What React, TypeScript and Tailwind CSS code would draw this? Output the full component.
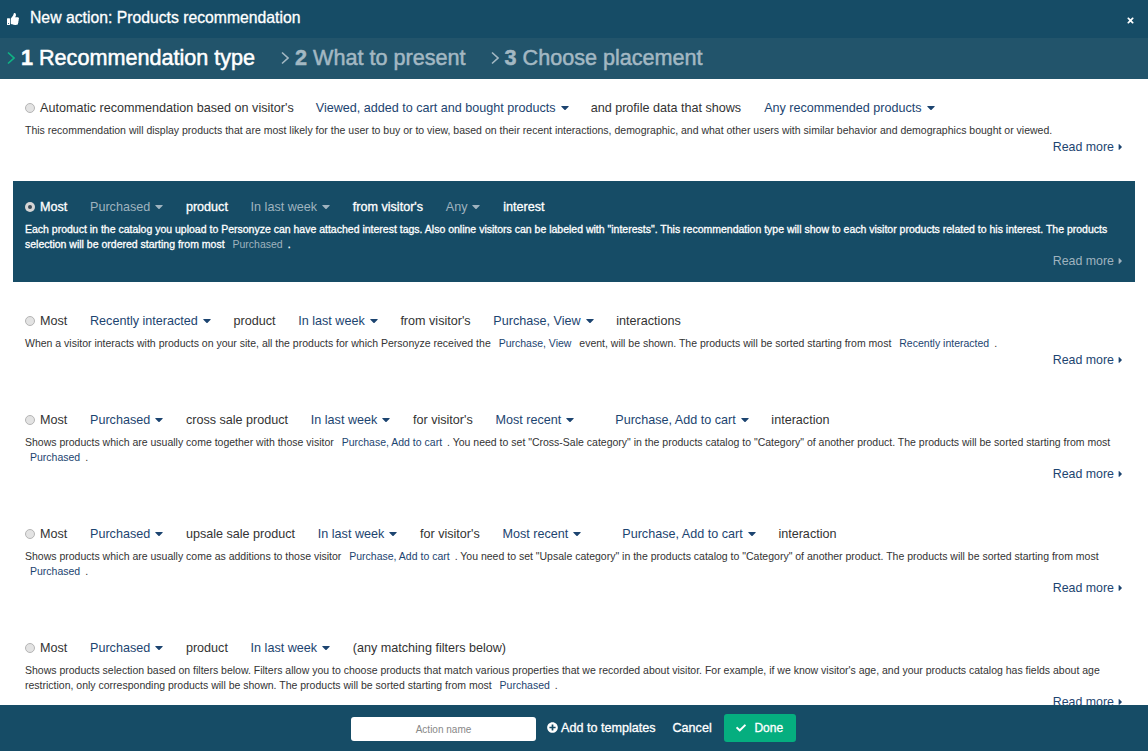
import { FaCaretDown, FaCaretRight, FaCheck, FaPlusCircle, FaThumbsUp, FaTimes } from "react-icons/fa";

type Piece = { text: string; link?: boolean; className: string };

type Row = {
  pieces: Piece[];
  desc: React.ReactNode;
  selected?: boolean;
  lastClass: string;
};

function Token({ children, selected }: { children: React.ReactNode; selected?: boolean }) {
  return (
    <span className={selected ? "mx-[5px] text-[#9fb3bf] [-webkit-text-stroke:0px]" : "mx-[5px] text-[#1c4470]"}>
      {children}
    </span>
  );
}

const rows: Row[] = [
  {
    lastClass: "h-[86px]",
    pieces: [
      { text: "Automatic recommendation based on visitor's", className: "ml-[5px]" },
      { text: "Viewed, added to cart and bought products", link: true, className: "ml-[22px]" },
      { text: "and profile data that shows", className: "ml-[22px]" },
      { text: "Any recommended products", link: true, className: "ml-[23px]" },
    ],
    desc: "This recommendation will display products that are most likely for the user to buy or to view, based on their recent interactions, demographic, and what other users with similar behavior and demographics bought or viewed.",
  },
  {
    selected: true,
    lastClass: "h-[101px]",
    pieces: [
      { text: "Most", className: "ml-[5px]" },
      { text: "Purchased", link: true, className: "ml-[22.7px]" },
      { text: "product", className: "ml-[22.7px]" },
      { text: "In last week", link: true, className: "ml-[22.7px]" },
      { text: "from visitor's", className: "ml-[22.7px]" },
      { text: "Any", link: true, className: "ml-[22.7px]" },
      { text: "interest", className: "ml-[22.7px]" },
    ],
    desc: (
      <>
        Each product in the catalog you upload to Personyze can have attached interest tags. Also online visitors can be labeled with "interests". This recommendation type will show to each visitor products related to his interest. The products selection will be ordered starting from most{" "}
        <Token selected>Purchased</Token>.
      </>
    ),
  },
  {
    lastClass: "h-[86px]",
    pieces: [
      { text: "Most", className: "ml-[5px]" },
      { text: "Recently interacted", link: true, className: "ml-[22.7px]" },
      { text: "product", className: "ml-[22.7px]" },
      { text: "In last week", link: true, className: "ml-[22.7px]" },
      { text: "from visitor's", className: "ml-[22.7px]" },
      { text: "Purchase, View", link: true, className: "ml-[22.7px]" },
      { text: "interactions", className: "ml-[22.7px]" },
    ],
    desc: (
      <>
        When a visitor interacts with products on your site, all the products for which Personyze received the{" "}
        <Token>Purchase, View</Token> event, will be shown. The products will be sorted starting from most{" "}
        <Token>Recently interacted</Token>.
      </>
    ),
  },
  {
    lastClass: "h-[101px]",
    pieces: [
      { text: "Most", className: "ml-[5px]" },
      { text: "Purchased", link: true, className: "ml-[22.7px]" },
      { text: "cross sale product", className: "ml-[22.7px]" },
      { text: "In last week", link: true, className: "ml-[22.7px]" },
      { text: "for visitor's", className: "ml-[22.7px]" },
      { text: "Most recent", link: true, className: "ml-[22.7px]" },
      { text: "Purchase, Add to cart", link: true, className: "ml-[41px]" },
      { text: "interaction", className: "ml-[22.7px]" },
    ],
    desc: (
      <>
        Shows products which are usually come together with those visitor{" "}
        <Token>Purchase, Add to cart</Token>. You need to set "Cross-Sale category" in the products catalog to "Category" of another product. The products will be sorted starting from most{" "}
        <Token>Purchased</Token>.
      </>
    ),
  },
  {
    lastClass: "h-[101px]",
    pieces: [
      { text: "Most", className: "ml-[5px]" },
      { text: "Purchased", link: true, className: "ml-[22.7px]" },
      { text: "upsale sale product", className: "ml-[22.7px]" },
      { text: "In last week", link: true, className: "ml-[22.7px]" },
      { text: "for visitor's", className: "ml-[22.7px]" },
      { text: "Most recent", link: true, className: "ml-[22.7px]" },
      { text: "Purchase, Add to cart", link: true, className: "ml-[41px]" },
      { text: "interaction", className: "ml-[22.7px]" },
    ],
    desc: (
      <>
        Shows products which are usually come as additions to those visitor{" "}
        <Token>Purchase, Add to cart</Token>. You need to set "Upsale category" in the products catalog to "Category" of another product. The products will be sorted starting from most{" "}
        <Token>Purchased</Token>.
      </>
    ),
  },
  {
    lastClass: "h-[101px]",
    pieces: [
      { text: "Most", className: "ml-[5px]" },
      { text: "Purchased", link: true, className: "ml-[22.7px]" },
      { text: "product", className: "ml-[22.7px]" },
      { text: "In last week", link: true, className: "ml-[22.7px]" },
      { text: "(any matching filters below)", className: "ml-[22.7px]" },
    ],
    desc: (
      <>
        Shows products selection based on filters below. Filters allow you to choose products that match various properties that we recorded about visitor. For example, if we know visitor's age, and your products catalog has fields about age restriction, only corresponding products will be shown. The products will be sorted starting from most{" "}
        <Token>Purchased</Token>.
      </>
    ),
  },
];

function RecommendationRow({ row }: { row: Row }) {
  const on = row.selected;
  return (
    <div className={`mb-[13px] shrink-0 px-[12px] pt-[16px] ${row.lastClass} ${on ? "bg-[#164c66] text-white [-webkit-text-stroke:0.3px_white]" : "text-[#333]"}`}>
      <div className="flex h-[20px] items-center text-[12.6px] whitespace-nowrap">
        {on ? (
          <span className="flex h-[10px] w-[10px] items-center justify-center rounded-full bg-[#d5d5d5]">
            <span className="h-[4px] w-[4px] rounded-full bg-[#3a4a55]" />
          </span>
        ) : (
          <span className="h-[10px] w-[10px] rounded-full border border-[#b5b5b5] bg-[#e3e3e3]" />
        )}
        {row.pieces.map((p, i) =>
          p.link ? (
            <span key={i} className={`flex items-center gap-[5px] ${p.className} ${on ? "text-[#9fb3bf] [-webkit-text-stroke:0px]" : "text-[#1c4470]"}`}>
              {p.text}
              <FaCaretDown className="h-[13px] w-[8px]" />
            </span>
          ) : (
            <span key={i} className={p.className}>{p.text}</span>
          ),
        )}
      </div>
      <p className="mt-[5px] text-[10.5px] leading-[15px]">{row.desc}</p>
      <div className={`flex items-center justify-end gap-[4px] text-[12.4px] leading-[18px] ${on ? "text-[#9fb3bf] [-webkit-text-stroke:0px]" : "text-[#1c4470]"}`}>
        Read more
        <FaCaretRight className="h-[10px] w-[5px]" />
      </div>
    </div>
  );
}

function Step({ n, label, active, className }: { n: string; label: string; active?: boolean; className: string }) {
  return (
    <div className={`flex items-center gap-[6px] ${className}`}>
      <svg width="8" height="14" viewBox="0 0 8 14" fill="none" stroke="currentColor" strokeWidth="1.6" className={active ? "text-[#0fb585]" : "text-[#a3b8c3]"}>
        <path d="M1 1.5 L7 7 L1 12.5" />
      </svg>
      <span className={`text-[21.6px] [-webkit-text-stroke:0.5px_currentColor] ${active ? "text-white" : "text-[#a3b8c3]"}`}>
        <b>{n}</b> {label}
      </span>
    </div>
  );
}

export default function App() {
  return (
    <div className="flex h-[751px] w-[1148px] flex-col overflow-hidden bg-white font-['Liberation_Sans',Arial,sans-serif]">
      <header className="flex h-[38px] shrink-0 items-center bg-[#164c66] pr-[13px] pl-[7px] text-white">
        <FaThumbsUp className="text-[12px]" />
        <h1 className="mb-[2px] ml-[11px] text-[15.75px] [-webkit-text-stroke:0.3px_white]">New action: Products recommendation</h1>
        <FaTimes className="mt-[3px] ml-auto text-[9px]" />
      </header>

      <nav className="flex h-[41px] shrink-0 items-center bg-[#22546b] pl-[7px]">
        <Step n="1" label="Recommendation type" active className="" />
        <Step n="2" label="What to present" className="ml-[26px]" />
        <Step n="3" label="Choose placement" className="ml-[25px]" />
      </nav>

      <main className="min-h-0 flex-1 overflow-hidden px-[13px] pt-[3px]">
        {rows.map((row, i) => (
          <RecommendationRow key={i} row={row} />
        ))}
      </main>

      <footer className="flex h-[46px] shrink-0 items-center bg-[#164c66] pl-[351px] text-white">
        <input
          placeholder="Action name"
          className="mt-[2px] h-[24px] w-[185px] rounded-[3px] bg-white text-center text-[10px] text-[#444] placeholder:text-[#888]"
        />
        <button className="ml-[11px] flex items-center gap-[3px] text-[12.6px] [-webkit-text-stroke:0.3px_white]">
          <FaPlusCircle className="text-[11px]" />
          Add to templates
        </button>
        <button className="ml-[17px] text-[12.6px] [-webkit-text-stroke:0.3px_white]">Cancel</button>
        <button className="ml-[12px] flex h-[28px] w-[72px] items-center justify-center gap-[8px] rounded-[3px] bg-[#05ae7f] text-[12px] [-webkit-text-stroke:0.3px_white]">
          <FaCheck className="text-[10px]" />
          Done
        </button>
      </footer>
    </div>
  );
}
